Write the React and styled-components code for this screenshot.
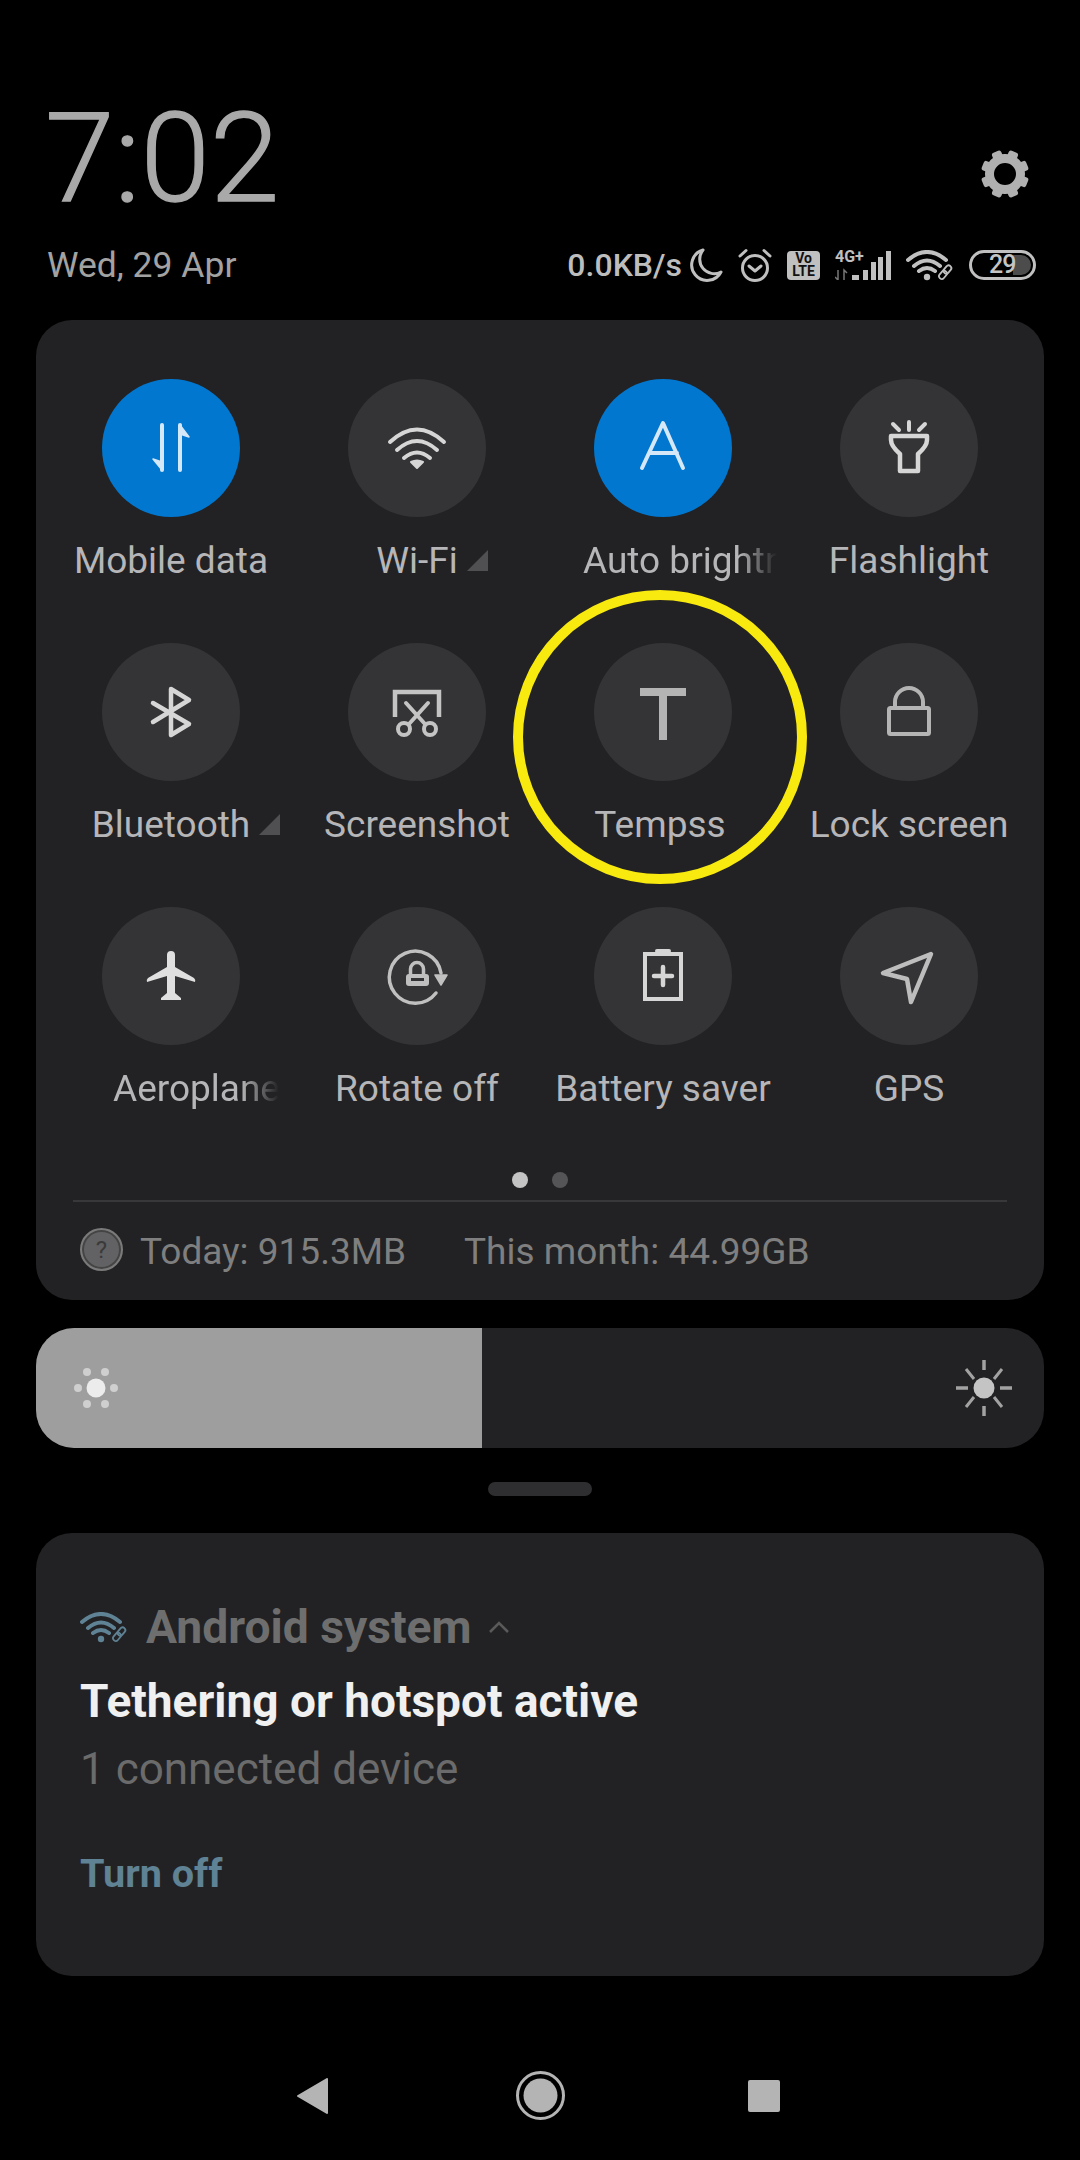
import React from "react";
import styled, { createGlobalStyle } from "styled-components";

const Global = createGlobalStyle`
  html, body { margin: 0; padding: 0; background: #000; }
  body { font-family: Roboto, "Liberation Sans", sans-serif; }
`;

const Screen = styled.div`
  width: 1080px; height: 2160px; background: #000; display: flex; flex-direction: column;
  position: relative; overflow: hidden;
`;
const Header = styled.header`
  height: 320px; box-sizing: border-box; padding: 97px 44px 0 48px; display: flex; flex-direction: column;
`;
const ClockRow = styled.div`
  display: flex; justify-content: space-between; align-items: flex-end; height: 124px;
`;
const Clock = styled.div`
  font-size: 125px; line-height: 124px; font-weight: 300; color: #a9a9a9; margin-left: -3px;
  -webkit-text-stroke: 1.4px #a9a9a9;
`;
const Gear = styled.svg`
  width: 50px; height: 50px; margin: 0 6px 22px 0; display: block;
`;
const StatusRow = styled.div`
  margin-top: 24px; display: flex; justify-content: space-between; align-items: center; height: 40px;
`;
const DateText = styled.div`
  font-size: 35.5px; line-height: 40px; color: #a2a2a2; margin-left: -1px;
`;
const StatusIcons = styled.div`
  display: flex; align-items: center; gap: 15px; color: #c0c0c0;
`;
const Speed = styled.span`
  font-size: 32px; line-height: 40px; font-weight: 500; color: #bdbdbd; margin-right: -7px;
`;
const Volte = styled.div`
  width: 33px; height: 29px; border-radius: 4px; background: #c0c0c0; color: #111; display: flex;
  flex-direction: column; align-items: center; justify-content: center;
  font-size: 14px; line-height: 13px; font-weight: 700;
`;
const Battery = styled.div`
  width: 67px; height: 30px; box-sizing: border-box; border: 3px solid #c0c0c0; border-radius: 15px;
  position: relative; display: flex; align-items: center; padding-left: 17px;
  font-size: 25px; line-height: 24px; font-weight: 500; color: #c4c4c4; letter-spacing: -1px;
  &::before {
    content: ""; position: absolute; right: 2px; top: 2px; bottom: 2px; width: 18px;
    border-radius: 0 10px 10px 0; background: #4c4c4c;
  }
`;
const BatteryValue = styled.span`
  position: relative;
`;
const Panel = styled.section`
  margin: 0 36px; height: 980px; box-sizing: border-box; background: #222224; border-radius: 36px;
  padding: 59px 12px 0; display: flex; flex-direction: column;
`;
const Grid = styled.div`
  display: grid; grid-template-columns: repeat(4, 246px); row-gap: 60px;
`;
const Tile = styled.div`
  display: flex; flex-direction: column; align-items: center; min-width: 0;
`;
const Round = styled.div`
  width: 138px; height: 138px; border-radius: 50%; background: ${p => (p.$on ? "#0277cf" : "#343436")};
  display: flex; align-items: center; justify-content: center;
`;
const RoundIcon = styled.svg`
  width: 138px; height: 138px; display: block; fill: none; stroke-linecap: round; stroke-linejoin: round;
`;
const Label = styled.div`
  margin: 22px ${p => p.$nudge || 0}px 0 0; height: 44px; position: relative;
  font-size: 37px; line-height: 44px; color: #b6b6b8; white-space: nowrap;
`;
const FadedLabel = styled.div`
  margin-top: 22px; height: 44px; align-self: flex-start; margin-left: ${p => p.$inset}px; width: ${p => p.$width}px;
  overflow: hidden; font-size: 37px; line-height: 44px; color: #b6b6b8; white-space: nowrap;
  mask-image: linear-gradient(to right, #000 calc(100% - 38px), transparent);
`;
const Corner = styled.span`
  position: absolute; left: calc(100% + 9px); bottom: 12px; width: 0; height: 0; border-style: solid;
  border-width: 0 0 21px 21px; border-color: transparent transparent #505052 transparent;
`;
const Marker = styled.div`
  position: absolute; left: 513px; top: 590px; width: 294px; height: 294px; box-sizing: border-box;
  border: 10px solid #f8e90e; border-radius: 50%;
`;
const Dots = styled.div`
  margin-top: 61px; display: flex; justify-content: center; gap: 24px;
`;
const Dot = styled.span`
  width: 16px; height: 16px; border-radius: 50%; background: ${p => (p.$on ? "#c4c4c4" : "#555557")};
`;
const Divider = styled.div`
  margin: 12px 25px 0; height: 2px; background: #38383a;
`;
const Usage = styled.div`
  margin: 28px 0 0 32px; display: flex; align-items: center; gap: 17px;
  font-size: 37px; line-height: 44px; color: #7f7f7f;
`;
const Help = styled.div`
  width: 43px; height: 43px; box-sizing: border-box; border-radius: 50%; background: #626264; border: 2px solid #7a7a7a;
  box-shadow: inset 0 0 0 2px #444; display: flex; align-items: center; justify-content: center;
  font-size: 24px; color: #3a3a3a; margin-top: -5px;
`;
const UsageGroup = styled.div`
  display: flex; gap: 58px;
`;
const BrightBar = styled.div`
  margin: 28px 36px 0; height: 120px; border-radius: 38px; background: #222224; overflow: hidden; display: flex;
`;
const BrightFill = styled.div`
  width: 446px; background: #9e9e9e; display: flex; align-items: center; padding-left: 35px; box-sizing: border-box;
`;
const BrightRest = styled.div`
  flex: 1; display: flex; align-items: center; justify-content: flex-end; padding-right: 30px;
`;
const Handle = styled.div`
  margin: 34px auto 0; width: 104px; height: 14px; border-radius: 7px; background: #2e2e30;
`;
const Card = styled.section`
  margin: 37px 36px 0; height: 443px; box-sizing: border-box; background: #222224; border-radius: 36px;
  padding: 69px 44px 0; display: flex; flex-direction: column;
`;
const AppRow = styled.div`
  display: flex; align-items: center; height: 50px;
`;
const AppName = styled.span`
  margin-left: 18px; font-size: 46.2px; line-height: 50px; font-weight: 700; color: #6e6e6e;
`;
const Chevron = styled.svg`
  margin-left: 18px; display: block;
`;
const Title = styled.div`
  margin-top: 24px; font-size: 46px; line-height: 50px; font-weight: 700; color: #f0f0f0;
`;
const Sub = styled.div`
  margin-top: 20px; font-size: 44px; line-height: 46px; color: #6b6b6b;
`;
const Action = styled.div`
  margin-top: 59px; font-size: 39.6px; line-height: 46px; font-weight: 700; color: #5f8294;
`;
const Nav = styled.nav`
  margin-top: 95px; padding-left: 297px; display: grid; grid-template-columns: 219px 232px auto; align-items: center;
`;

const BLUE = "#d5e8f8";
const W = "#d6d6d6";

const icons = {
  data: (
    <>
      <path d="M60 46V91M78 91V46" stroke={BLUE} strokeWidth="4" />
      <path d="M60 91L51 80L60 83ZM78 46L87 58L78 55Z" fill={BLUE} stroke={BLUE} strokeWidth="1.5" />
    </>
  ),
  wifi: (
    <>
      <path d="M42 63Q69 38 96 63M49 71Q69 53 89 71M56 79Q69 68 82 79" stroke={W} strokeWidth="4" />
      <path d="M63 83Q69 80 75 83L69 89Z" fill={W} stroke={W} strokeWidth="2" />
    </>
  ),
  auto: <path d="M48 89L69 44L89 89M55 74H83" stroke={BLUE} strokeWidth="4" />,
  flash: (
    <>
      <path d="M53 45L59 51M69 43V51M85 45L79 51" stroke={W} strokeWidth="4" />
      <path d="M51 57H87V61Q87 67 78 75V92H60V75Q51 67 51 61Z" stroke={W} strokeWidth="4.5" />
    </>
  ),
  bt: <path d="M51 60L87 81L69 92V46L87 57L51 79" stroke={W} strokeWidth="4.5" />,
  shot: (
    <>
      <path d="M47 74V49H91V74" stroke="#c4c4c4" strokeWidth="4.5" strokeLinecap="butt" strokeLinejoin="miter" />
      <path d="M58 60L77 81M80 60L61 81" stroke="#c4c4c4" strokeWidth="4" />
      <circle cx="56" cy="86" r="6" stroke="#c4c4c4" strokeWidth="4" />
      <circle cx="82" cy="86" r="6" stroke="#c4c4c4" strokeWidth="4" />
    </>
  ),
  temp: <path d="M46 49H92M69 49V97" stroke="#b4b4b4" strokeWidth="8" strokeLinecap="butt" />,
  lock: (
    <>
      <rect x="49" y="65" width="40" height="26" rx="1.5" stroke="#b4b4b4" strokeWidth="4" />
      <path d="M55 64V59A14 14 0 0 1 83 59V64" stroke="#b4b4b4" strokeWidth="4" />
    </>
  ),
  plane: (
    <path
      d="M65 48a4 4 0 0 1 8 0V60L92 71Q94 73 93 75L73 69V86L79 91V93H59V91L65 86V69L45 75Q44 73 46 71L65 60Z"
      fill="#e0e0e0"
    />
  ),
  rotate: (
    <>
      <path d="M88 86A26 26 0 1 1 93 66" stroke="#c0c0c0" strokeWidth="3.5" />
      <path d="M87 68H99L93 78Z" fill="#c0c0c0" stroke="#c0c0c0" strokeWidth="1.5" />
      <path d="M62.5 68V62A6 6 0 0 1 75.5 62V68" stroke="#c0c0c0" strokeWidth="3.5" />
      <rect x="58" y="67" width="23" height="12" rx="3" fill="#c0c0c0" />
      <rect x="63" y="71" width="13" height="3" fill="#343436" />
    </>
  ),
  saver: (
    <>
      <rect x="51" y="47" width="36" height="45" stroke={W} strokeWidth="4" strokeLinejoin="miter" />
      <path d="M63 44H75" stroke={W} strokeWidth="4" />
      <path d="M60 69H78M69 60V78" stroke={W} strokeWidth="4.5" />
    </>
  ),
  gps: <path d="M91 47L43 66L67 72L71 95Z" stroke="#bdbdbd" strokeWidth="4.5" />,
};

const tiles = [
  { id: "data", on: true, label: "Mobile data" },
  { id: "wifi", label: "Wi-Fi", corner: true },
  { id: "auto", on: true, label: "Auto brightness", inset: 43, width: 194 },
  { id: "flash", label: "Flashlight" },
  { id: "bt", label: "Bluetooth", corner: true },
  { id: "shot", label: "Screenshot" },
  { id: "temp", label: "Tempss", nudge: 6 },
  { id: "lock", label: "Lock screen" },
  { id: "plane", label: "Aeroplane", inset: 65, width: 166 },
  { id: "rotate", label: "Rotate off" },
  { id: "saver", label: "Battery saver" },
  { id: "gps", label: "GPS" },
];

function GearIcon() {
  const teeth = [22.5, 67.5, 112.5, 157.5, 202.5, 247.5, 292.5, 337.5];
  return (
    <Gear viewBox="0 0 50 50">
      <circle cx="25" cy="25" r="15.5" fill="none" stroke="#b0b0b0" strokeWidth="9" />
      {teeth.map(a => (
        <rect key={a} x="20" y="1" width="10" height="10" rx="2.5" fill="#b0b0b0" transform={`rotate(${a} 25 25)`} />
      ))}
    </Gear>
  );
}

function WifiLink({ color, scale = 1 }) {
  return (
    <svg width={48 * scale} height={31 * scale} viewBox="0 0 48 31" fill="none" strokeLinecap="round" style={{ display: "block" }}>
      <path d="M2 10Q21 -6 40 10M8 16Q21 5 34 16M13 21Q21 15 29 21" stroke={color} strokeWidth="4" />
      <circle cx="21" cy="27" r="3.2" fill={color} />
      <g transform="rotate(-50 39 22)" stroke={color} strokeWidth="1.8">
        <rect x="31" y="19.5" width="9" height="5.5" rx="2.7" />
        <rect x="38" y="19.5" width="9" height="5.5" rx="2.7" />
      </g>
    </svg>
  );
}

export default function App() {
  return (
    <Screen>
      <Global />
      <Header>
        <ClockRow>
          <Clock>7:02</Clock>
          <GearIcon />
        </ClockRow>
        <StatusRow>
          <DateText>Wed, 29 Apr</DateText>
          <StatusIcons>
            <Speed>0.0KB/s</Speed>
            <svg width="33" height="34" viewBox="0 0 33 34" fill="none" stroke="#c0c0c0" strokeWidth="3" strokeLinejoin="round">
              <path d="M13 2A15.5 15.5 0 1 0 31 24A14.5 14.5 0 0 1 13 2Z" />
            </svg>
            <svg width="34" height="35" viewBox="0 0 34 35" fill="none" stroke="#c0c0c0" strokeWidth="3" strokeLinecap="round" strokeLinejoin="round">
              <circle cx="17" cy="20" r="12.5" />
              <path d="M11 18L17 23L23 18M2 8L8 2.5M26 2.5L32 8" />
            </svg>
            <Volte>
              <span>Vo</span>
              <span>LTE</span>
            </Volte>
            <svg width="56" height="30" viewBox="0 0 56 30">
              <text x="0" y="11.5" fontSize="16" fontWeight="700" fontFamily="Roboto, sans-serif" fill="#c0c0c0">4G+</text>
              <rect x="17" y="25" width="7" height="5" fill="#c0c0c0" />
              <rect x="28" y="20" width="5" height="10" fill="#c0c0c0" />
              <rect x="36" y="12" width="5" height="18" fill="#c0c0c0" />
              <rect x="43" y="7" width="5" height="23" fill="#c0c0c0" />
              <rect x="51" y="1" width="5" height="29" fill="#c0c0c0" />
              <path d="M3 20V30L0 27M9 30V20L12 23" stroke="#777" strokeWidth="1.5" fill="none" />
            </svg>
            <WifiLink color="#c0c0c0" />
            <Battery><BatteryValue>29</BatteryValue></Battery>
          </StatusIcons>
        </StatusRow>
      </Header>

      <Panel>
        <Grid>
          {tiles.map(t => (
            <Tile key={t.id}>
              <Round $on={t.on}>
                <RoundIcon viewBox="0 0 138 138">{icons[t.id]}</RoundIcon>
              </Round>
              {t.width ? (
                <FadedLabel $inset={t.inset} $width={t.width}>{t.label}</FadedLabel>
              ) : (
                <Label $nudge={t.nudge}>
                  {t.label}
                  {t.corner && <Corner />}
                </Label>
              )}
            </Tile>
          ))}
        </Grid>
        <Dots>
          <Dot $on />
          <Dot />
        </Dots>
        <Divider />
        <Usage>
          <Help>?</Help>
          <UsageGroup>
            <span>Today: 915.3MB</span>
            <span>This month: 44.99GB</span>
          </UsageGroup>
        </Usage>
      </Panel>

      <BrightBar>
        <BrightFill>
          <svg width="50" height="44" viewBox="0 0 50 44">
            <circle cx="25" cy="22" r="9.5" fill="#ececec" />
            {[[16, 6], [34, 6], [7, 22], [43, 22], [16, 38], [34, 38]].map(([x, y]) => (
              <circle key={`${x}-${y}`} cx={x} cy={y} r="4" fill="#cfcfcf" />
            ))}
          </svg>
        </BrightFill>
        <BrightRest>
          <svg width="60" height="60" viewBox="0 0 60 60" fill="none" stroke="#a2a2a2" strokeLinecap="butt">
            <circle cx="30" cy="30" r="10.5" fill="#c4c4c4" stroke="none" />
            <path d="M30 2V12M30 48V58M2 30H14M46 30H58" strokeWidth="3.5" />
            <path d="M12 11L20 21M48 11L40 21M12 49L20 39M48 49L40 39" strokeWidth="3" />
          </svg>
        </BrightRest>
      </BrightBar>

      <Handle />

      <Card>
        <AppRow>
          <WifiLink color="#5f8294" />
          <AppName>Android system</AppName>
          <Chevron width="20" height="12" viewBox="0 0 20 12" fill="none" stroke="#5a5a5a" strokeWidth="2.5">
            <path d="M1 11L10 2L19 11" />
          </Chevron>
        </AppRow>
        <Title>Tethering or hotspot active</Title>
        <Sub>1 connected device</Sub>
        <Action>Turn off</Action>
      </Card>

      <Nav>
        <svg width="31" height="36" viewBox="0 0 31 36" fill="#b4b4b4" stroke="#b4b4b4" strokeWidth="2" strokeLinejoin="round">
          <path d="M30 1V35L1 18Z" />
        </svg>
        <svg width="49" height="49" viewBox="0 0 49 49">
          <circle cx="24.5" cy="24.5" r="23" fill="none" stroke="#b4b4b4" strokeWidth="3" />
          <circle cx="24.5" cy="24.5" r="17" fill="#b4b4b4" />
        </svg>
        <svg width="32" height="32" viewBox="0 0 32 32">
          <rect width="32" height="32" rx="2" fill="#b4b4b4" />
        </svg>
      </Nav>

      <Marker />
    </Screen>
  );
}
